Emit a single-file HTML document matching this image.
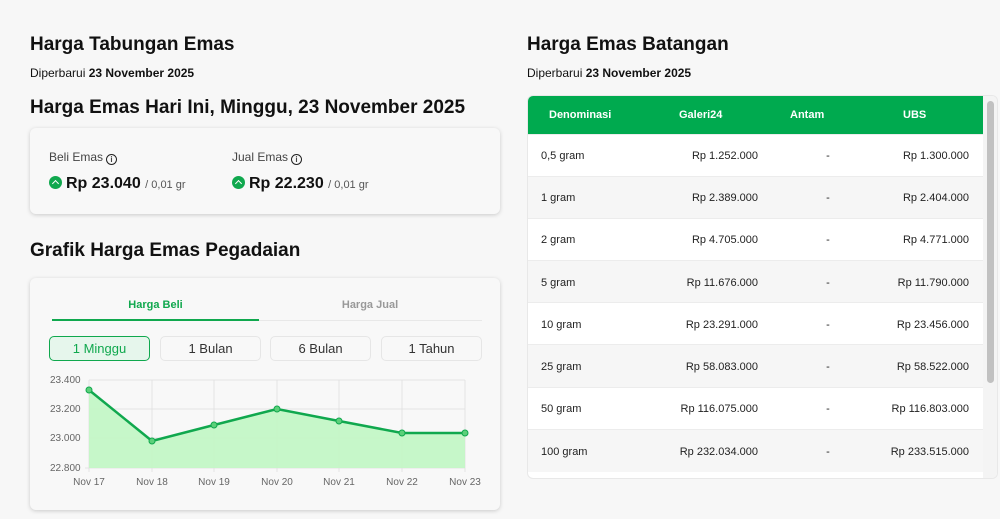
<!DOCTYPE html><html><head><style>
*{margin:0;padding:0;box-sizing:border-box}
body{width:1000px;height:519px;background:#f7f7f7;font-family:"Liberation Sans",sans-serif;color:#111;position:relative;overflow:hidden}
.a{position:absolute}
h1{position:absolute;font-size:19px;font-weight:bold;color:#111}
.sub{position:absolute;font-size:12px;color:#111}
.card{position:absolute;background:#f8f8f8;border-radius:6px;box-shadow:0 1px 4px rgba(0,0,0,.18)}
.ic{display:inline-block;width:11px;height:11px;border:1.3px solid #222;border-radius:50%;font-size:8px;text-align:center;line-height:9px;font-weight:bold;vertical-align:-1px;margin-left:3px}
.up{display:inline-block;width:13px;height:13px;border-radius:50%;background:#10a84e;vertical-align:-1px;margin-right:4px;position:relative}
.up:after{content:"";position:absolute;left:4px;top:5px;width:4px;height:4px;border-left:1.6px solid #fff;border-top:1.6px solid #fff;transform:rotate(45deg)}
.btn{position:absolute;top:336px;height:25px;width:101px;border:1px solid #e6e6e6;border-radius:5px;background:#f8f8f8;font-size:13px;text-align:center;line-height:23px;color:#333}
table{border-collapse:collapse;font-size:11px;width:455px;table-layout:fixed}
td,th{height:42.2px;padding:0}
th{height:38px;color:#fff;font-weight:bold;text-align:left}
tr:nth-child(odd) td{background:#f6f6f6}
td{border-top:1px solid #ececec;color:#222;padding-top:2px}
td.d{text-align:center;padding-left:38px}
td.u{text-align:right;padding-right:14px}
</style></head><body>
<h1 style="left:30px;top:34px">Harga Tabungan Emas</h1>
<div class="sub" style="left:30px;top:66px">Diperbarui <b>23 November 2025</b></div>
<h1 style="left:30px;top:97px">Harga Emas Hari Ini, Minggu, 23 November 2025</h1>
<div class="card" style="left:30px;top:128px;width:470px;height:86px">
 <div class="a" style="left:19px;top:22px;font-size:12px;color:#444">Beli Emas<span class="ic">i</span></div>
 <div class="a" style="left:19px;top:47px;font-size:16px;font-weight:bold"><span class="up"></span>Rp 23.040 <span style="font-size:11px;font-weight:normal;color:#555">/ 0,01 gr</span></div>
 <div class="a" style="left:202px;top:22px;font-size:12px;color:#444">Jual Emas<span class="ic">i</span></div>
 <div class="a" style="left:202px;top:47px;font-size:16px;font-weight:bold"><span class="up"></span>Rp 22.230 <span style="font-size:11px;font-weight:normal;color:#555">/ 0,01 gr</span></div>
</div>
<h1 style="left:30px;top:240px">Grafik Harga Emas Pegadaian</h1>
<div class="card" style="left:30px;top:278px;width:470px;height:232px"></div>
<div class="a" style="left:52px;top:299px;width:207px;text-align:center;font-size:11px;font-weight:bold;color:#10a84e">Harga Beli</div>
<div class="a" style="left:259px;top:299px;width:222px;text-align:center;font-size:11px;font-weight:bold;color:#999">Harga Jual</div>
<div class="a" style="left:52px;top:320px;width:430px;height:1px;background:#e8e8e8"></div>
<div class="a" style="left:52px;top:319px;width:207px;height:2px;background:#10a84e"></div>
<div class="btn" style="left:49px;border-color:#10a84e;background:#e6f6ec;color:#10a84e">1 Minggu</div>
<div class="btn" style="left:160px">1 Bulan</div>
<div class="btn" style="left:270px">6 Bulan</div>
<div class="btn" style="left:381px">1 Tahun</div>
<svg class="a" style="left:0;top:0" width="500" height="519">
<g stroke="#e3e3e3" stroke-width="1">
<line x1="89" y1="380" x2="465" y2="380"/><line x1="89" y1="409" x2="465" y2="409"/><line x1="89" y1="438" x2="465" y2="438"/><line x1="85" y1="468" x2="465" y2="468"/>
<line x1="89" y1="380" x2="89" y2="472"/><line x1="152" y1="380" x2="152" y2="472"/><line x1="214" y1="380" x2="214" y2="472"/><line x1="277" y1="380" x2="277" y2="472"/><line x1="339" y1="380" x2="339" y2="472"/><line x1="402" y1="380" x2="402" y2="472"/><line x1="465" y1="380" x2="465" y2="472"/>
</g>
<path d="M89 390 L152 441 L214 425 L277 409 L339 421 L402 433 L465 433 L465 468 L89 468Z" fill="#c3f7c6" opacity=".95"/>
<path d="M89 390 L152 441 L214 425 L277 409 L339 421 L402 433 L465 433" fill="none" stroke="#10a84e" stroke-width="2.5"/>
<g fill="#5cd07a" stroke="#10a84e" stroke-width="1"><circle cx="89" cy="390" r="3"/><circle cx="152" cy="441" r="3"/><circle cx="214" cy="425" r="3"/><circle cx="277" cy="409" r="3"/><circle cx="339" cy="421" r="3"/><circle cx="402" cy="433" r="3"/><circle cx="465" cy="433" r="3"/></g>
<g font-size="10" fill="#666" font-family="Liberation Sans"><text x="50" y="383">23.400</text><text x="50" y="412">23.200</text><text x="50" y="441">23.000</text><text x="50" y="471">22.800</text>
<g text-anchor="middle"><text x="89" y="485">Nov 17</text><text x="152" y="485">Nov 18</text><text x="214" y="485">Nov 19</text><text x="277" y="485">Nov 20</text><text x="339" y="485">Nov 21</text><text x="402" y="485">Nov 22</text><text x="465" y="485">Nov 23</text></g></g>
</svg>
<h1 style="left:527px;top:34px">Harga Emas Batangan</h1>
<div class="sub" style="left:527px;top:66px">Diperbarui <b>23 November 2025</b></div>
<div class="a" style="left:527px;top:95px;width:471px;height:384px;background:#fff;border:1px solid #e8e8e8;border-radius:6px;overflow:hidden">
<table><colgroup><col style="width:130px"><col style="width:100px"><col style="width:102px"><col></colgroup>
<tr style="background:#00aa4f"><th style="padding-left:21px">Denominasi</th><th style="padding-left:21px">Galeri24</th><th style="padding-left:32px">Antam</th><th style="padding-left:43px">UBS</th></tr>
<tr><td style="padding-left:13px">0,5 gram</td><td style="text-align:right">Rp 1.252.000</td><td class="d">-</td><td class="u">Rp 1.300.000</td></tr>
<tr><td style="padding-left:13px">1 gram</td><td style="text-align:right">Rp 2.389.000</td><td class="d">-</td><td class="u">Rp 2.404.000</td></tr>
<tr><td style="padding-left:13px">2 gram</td><td style="text-align:right">Rp 4.705.000</td><td class="d">-</td><td class="u">Rp 4.771.000</td></tr>
<tr><td style="padding-left:13px">5 gram</td><td style="text-align:right">Rp 11.676.000</td><td class="d">-</td><td class="u">Rp 11.790.000</td></tr>
<tr><td style="padding-left:13px">10 gram</td><td style="text-align:right">Rp 23.291.000</td><td class="d">-</td><td class="u">Rp 23.456.000</td></tr>
<tr><td style="padding-left:13px">25 gram</td><td style="text-align:right">Rp 58.083.000</td><td class="d">-</td><td class="u">Rp 58.522.000</td></tr>
<tr><td style="padding-left:13px">50 gram</td><td style="text-align:right">Rp 116.075.000</td><td class="d">-</td><td class="u">Rp 116.803.000</td></tr>
<tr><td style="padding-left:13px">100 gram</td><td style="text-align:right">Rp 232.034.000</td><td class="d">-</td><td class="u">Rp 233.515.000</td></tr>
</table>
<div class="a" style="right:0;top:0;width:14px;height:384px;background:#f4f4f4"></div>
<div class="a" style="right:3px;top:5px;width:7px;height:282px;background:#c1c1c1;border-radius:4px"></div>
</div>
</body></html>
